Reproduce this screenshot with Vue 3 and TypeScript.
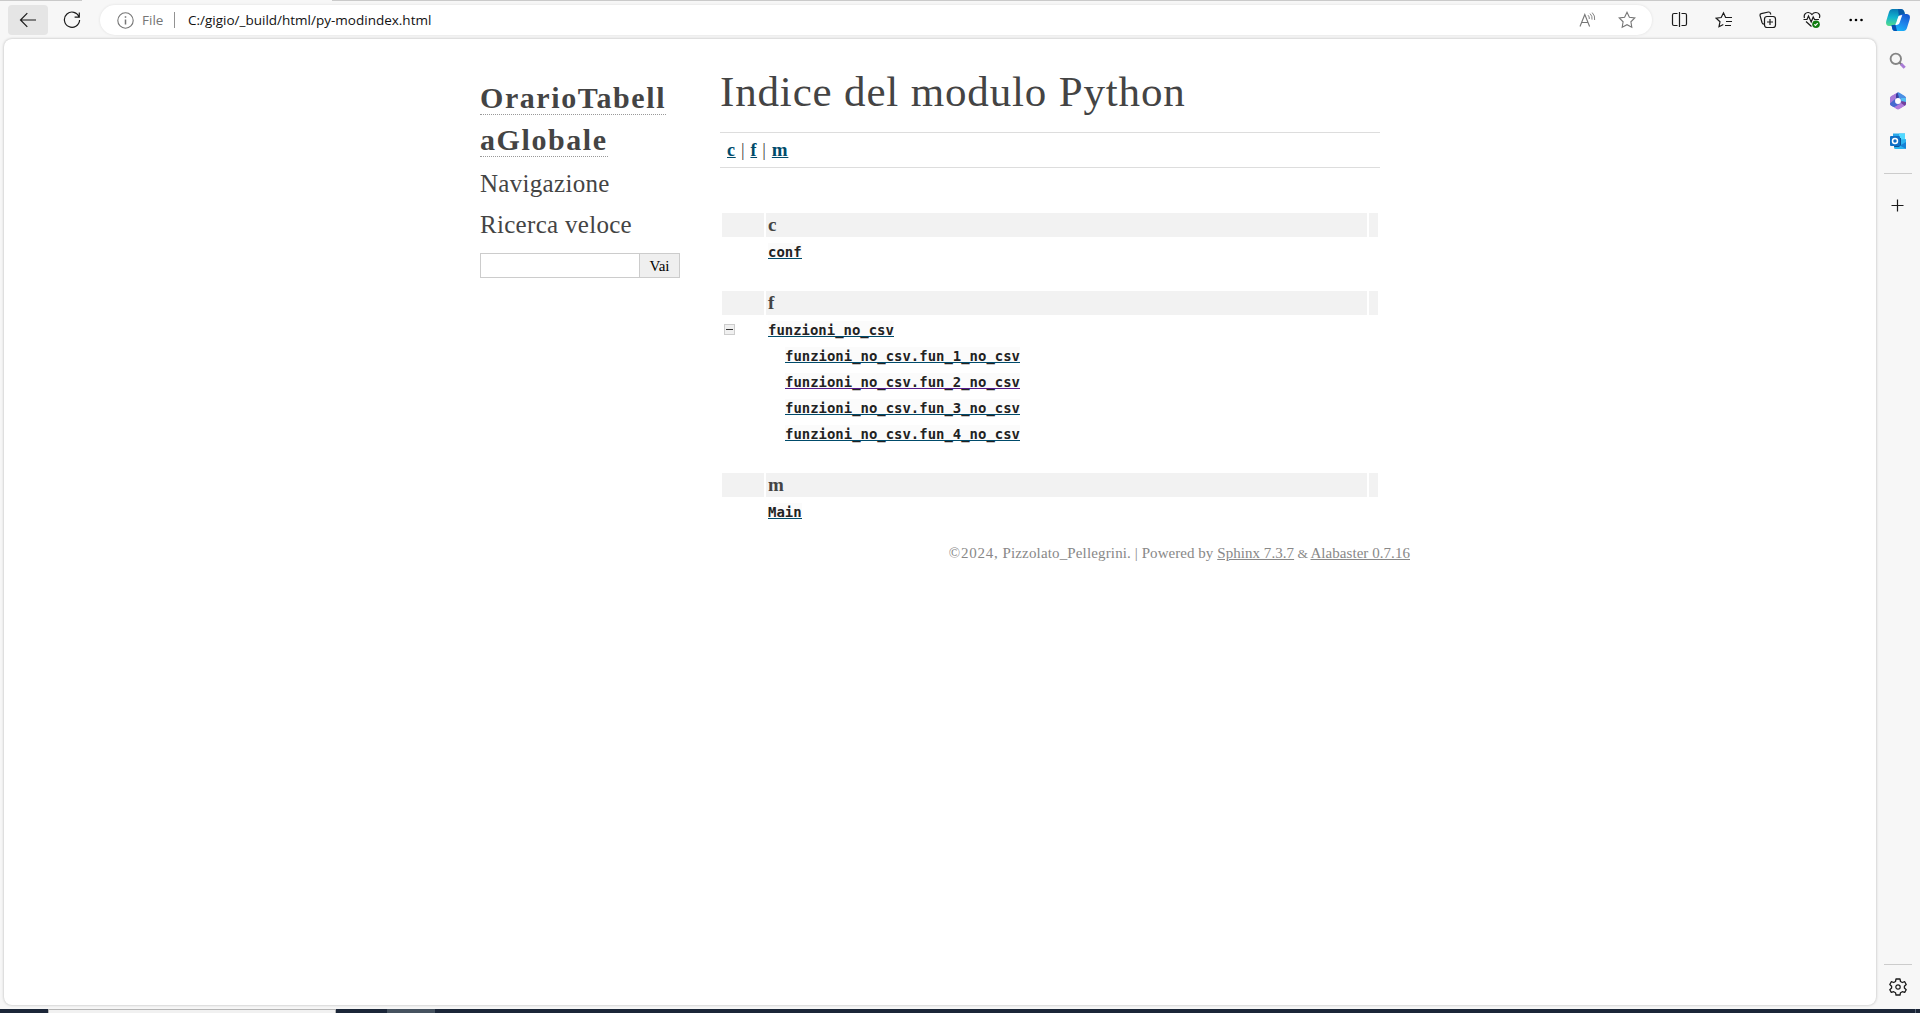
<script setup lang="ts">
interface Entry { name: string; sub?: boolean; toggle?: boolean; visited?: boolean }
interface Group { letter: string; entries: Entry[] }

const groups: Group[] = [
  { letter: 'c', entries: [{ name: 'conf' }] },
  {
    letter: 'f',
    entries: [
      { name: 'funzioni_no_csv', toggle: true },
      { name: 'funzioni_no_csv.fun_1_no_csv', sub: true },
      { name: 'funzioni_no_csv.fun_2_no_csv', sub: true, visited: true },
      { name: 'funzioni_no_csv.fun_3_no_csv', sub: true },
      { name: 'funzioni_no_csv.fun_4_no_csv', sub: true },
    ],
  },
  { letter: 'm', entries: [{ name: 'Main' }] },
]
</script>

<template>
  <div class="window">
    <div class="tabstrip"><i class="active-tab"></i></div>
    <header class="toolbar">
      <div class="back">
        <svg width="18" height="16" viewBox="0 0 18 16" class="ink"><path d="M17 8H1.5M8.3 1.2 1.5 8l6.800 6.800" /></svg>
      </div>
      <svg class="reload ink" width="18" height="18" viewBox="0 0 18 18"><path d="M16.200 6.200A7.600 7.600 0 1 0 16.600 9M16.300 1.500V6.200H11.600" /></svg>
      <div class="address">
        <svg width="17" height="17" viewBox="0 0 17 17" class="gray"><circle cx="8.500" cy="8.500" r="7.700" /><path d="M8.500 7.500v5M8.500 4.300v1.500" stroke-width="1.500" /></svg>
        <span class="scheme">File</span>
        <i class="divider"></i>
        <span class="url">C:/gigio/_build/html/py-modindex.html</span>
        <svg class="read gray" width="17" height="16" viewBox="0 0 17 16"><path d="M1 14.500 5.800 2.500l4.800 12M2.700 10.500h6.200" /><path d="M9 3.200q1.600 1.500 1.300 3.800M11 1.600q2.600 2.400 2 6M13.200.6q3.200 3.200 2.400 7.400" stroke-width=".9" /></svg>
        <svg class="star gray" width="18" height="18" viewBox="0 0 18 18"><path d="m9 1.300 2.400 4.900 5.400.8-3.900 3.800.9 5.400L9 13.700l-4.800 2.500.9-5.400L1.200 7l5.400-.8z" /></svg>
      </div>
      <nav class="tools">
        <svg width="18" height="18" viewBox="0 0 18 18" class="ink"><path d="M6.500 2.500H3Q1.500 2.500 1.500 4v9q0 1.500 1.500 1.500h3.500M8.500 1v15M10.500 2.500H14q1.500 0 1.500 1.500v9q0 1.500-1.500 1.500h-3.500" /></svg>
        <svg width="18" height="18" viewBox="0 0 18 18" class="ink"><path d="M17 6.500H10.600L8.500 1.800 6.200 6.500l-5 .7 3.800 3.500-1 5L8.300 13.500M11 10.500h6M10 14.500h6" /></svg>
        <svg width="18" height="18" viewBox="0 0 18 18" class="ink"><path d="M5 13.200Q3.500 13 3 11.500L1 4.500Q.8 3 2.200 2.700L9.500 1q1.600-.2 2 1.500l.4 1" /><rect x="5.500" y="5.500" width="11" height="11" rx="2.500" /><path d="M11 8v6M8 11h6" /></svg>
        <svg width="18" height="18" viewBox="0 0 18 18" class="ink"><path d="M1.500 7C.3 3.500 3 1.300 5.300 1.500 7.500 1.700 9 3.500 9 3.500S10.500 1.500 12.700 1.500c3 0 5 2.500 3.600 5.500M3 10.500l5.500 5M.5 8.500H4L5.500 5l2.700 6 2-5 1.300 2.500h4.500" /><circle cx="13" cy="13.300" r="3.800" fill="#107c10" stroke="none" /><path d="m11.300 13.300 1.200 1.200 2.200-2.400" stroke="#fff" /></svg>
        <svg width="18" height="18" viewBox="0 0 18 18"><circle cx="3.700" cy="9" r="1.300" /><circle cx="9" cy="9" r="1.300" /><circle cx="14.500" cy="9" r="1.300" /></svg>
      </nav>
      <svg class="copilot" width="24" height="24" viewBox="0 0 24 24">
        <defs>
          <linearGradient id="ca" x1="0.300" y1="0" x2="0.200" y2="1"><stop offset="0" stop-color="#087cb5" /><stop offset=".5" stop-color="#13b5cf" /><stop offset="1" stop-color="#55dc8a" /></linearGradient>
          <linearGradient id="cb" x1="0.800" y1="0" x2="0.300" y2="1"><stop offset="0" stop-color="#1557d0" /><stop offset=".5" stop-color="#1f83ea" /><stop offset="1" stop-color="#18b8fa" /></linearGradient>
        </defs>
        <path d="M6.500 1H15q2.500 0 3.300 2.800L19 7h-3q-3 0-3.800 2.800L11 14q-1 4-3.500 4H3q-4-.7-2.600-5.500L3 4Q4 1 6.500 1z" fill="url(#ca)" />
        <path d="M12 1h3q2.500 0 3.300 2.800L19 7h-3q-2 0-3.100 1.300z" fill="#0759a8" />
        <path d="M17.500 23H9q-2.500 0-2.900-3L5.500 17H8q2.500-.3 3.300-3l1.500-4.500Q13.800 6 16.500 6H21q4 .7 2.600 5.500L21 20q-1 3-3.500 3z" fill="url(#cb)" />
        <path d="m10.300 14.500 2-6q.6-1.500 4-1.500L13.500 15q-.8 2-4.500 2.200z" fill="#fff" />
        <path d="M5.500 17H8l1.500-.3L11 23H9q-2.500 0-2.900-3z" fill="#064eaf" />
      </svg>
    </header>

    <div class="middle">
      <main class="page">
        <div class="document">
          <aside class="sidebar">
            <h1 class="logo"><a>OrarioTabell<br>aGlobale</a></h1>
            <h3 class="nav">Navigazione</h3>
            <h3>Ricerca veloce</h3>
            <div class="search"><span></span><button>Vai</button></div>
          </aside>
          <section class="body">
            <h1>Indice del modulo Python</h1>
            <div class="jumpbox"><a>c</a> | <a>f</a> | <a class="wide">m</a></div>
            <div class="index">
              <div v-for="g in groups" :key="g.letter" class="group">
                <div class="row cap"><i></i><b>{{ g.letter }}</b><i></i></div>
                <div v-for="e in g.entries" :key="e.name" class="row">
                  <div><i v-if="e.toggle" class="toggle"></i></div>
                  <div><a class="entry" :class="{ sub: e.sub, visited: e.visited }">{{ e.name }}</a></div>
                </div>
              </div>
            </div>
          </section>
        </div>
        <footer><span class="year">©2024,</span> <span class="author">Pizzolato_Pellegrini.</span> | Powered by <a>Sphinx 7.3.7</a> <span class="amp">&amp;</span> <a>Alabaster 0.7.16</a></footer>
      </main>
      <aside class="rail">
        <svg class="find" width="18" height="18" viewBox="0 0 18 18" fill="none"><circle cx="6.800" cy="6.800" r="5.200" stroke="#858585" stroke-width="1.900" /><path d="m10.700 10.700 2 2" stroke="#777" stroke-width="2" /><path d="m12 12 3.700 3.700" stroke="#a97bd6" stroke-width="3" /></svg>
        <svg class="office" width="18" height="18" viewBox="0 0 18 18"><path d="M9 .7 16.700 5v8L9 17.300 1.300 13V5z" fill="#6d6fd6" /><path d="M8.500.5 2.300 4Q1 5 1 6.500v5q0 1.500 1.300 2.300L5 15l2.500-4-1-3z" fill="#a779d8" /><path d="M1 11.500q0 1.500 1.300 2.300L5 15.300l3-1.600V12L6 10V7z" fill="#4769cf" /><path d="M8.500.5q1-.4 2 .2L15.700 4Q17 5 17 6.500V11l-5-2-1-2.500-4-1V3z" fill="#4a8fe4" /><path d="M12 6h5v5l-4.500-1.500z" fill="#52bdf2" /><path d="M8.500.5 7 2.300V7l3-1.500z" fill="#373f9e" /><path d="M17 10v1.500q0 1.500-1.300 2.300L10.500 17q-1.500.8-3 0L5 15.300 11 12l1-2z" fill="#b27bdc" /><path d="M17 10v1.500q0 1.500-1.300 2.300L12 11l.5-2z" fill="#70419c" /><circle cx="9" cy="9" r="2.900" fill="#fff" /></svg>
        <svg class="outlook" width="18" height="18" viewBox="0 0 18 18"><path d="M4 1.500h12V14H4z" fill="#28a8ea" /><path d="M10 1.500h6v6h-6z" fill="#50d9ff" /><path d="M4 4h6v5H4z" fill="#0364b8" /><path d="m5 10 12-3v8.500q0 1.500-1.500 1.500h-9Q5 17 5 15.500z" fill="#2bb3ef" /><path d="m17 10-6 3.500L17 17z" fill="#1681d5" /><path d="M8 6h4v7l-2 2H5z" fill="#0b5295" /><rect x="1" y="4" width="10" height="10" rx="1" fill="#0f6fc6" /><circle cx="6" cy="9" r="2.500" fill="none" stroke="#fff" stroke-width="1.500" /></svg>
        <hr>
        <svg class="plus ink" width="13" height="13" viewBox="0 0 13 13"><path d="M6.500.5v12M.5 6.500h12" /></svg>
        <div class="space"></div>
        <hr class="low">
        <svg class="gear ink" width="18" height="18" viewBox="0 0 18 18"><path d="m7 1-.5 2.500-1.800 1L2.300 3.700.8 6.500l1.800 1.700v1.900L.8 11.700l1.500 2.700 2.400-.7 1.800 1L7 17h4l.5-2.300 1.800-1 2.400.7 1.500-2.700-1.800-1.600V8.200l1.800-1.700-1.500-2.800-2.400.8-1.800-1L11 1z" stroke-linejoin="round" stroke-width="1.300" /><circle cx="9" cy="9" r="2.200" /></svg>
      </aside>
    </div>
    <div class="taskbar"><i class="task"></i><i class="task dim"></i><i class="peek"></i></div>
  </div>
</template>

<style>
body { margin: 0; overflow: hidden; }
</style>

<style scoped>
* { box-sizing: border-box; }
svg { display: block; flex: none; }
.window { width: 1920px; height: 1013px; display: flex; flex-direction: column; background: #f7f7f7; font-family: "Liberation Serif", serif; color: #444; overflow: hidden; }
.tabstrip { height: 1px; background: #cacaca; padding-left: 82px; flex: none; }
.active-tab { display: block; width: 250px; height: 1px; background: #f7f7f7; }
.ink { fill: none; stroke: #1b1b1b; stroke-width: 1.200; }
.gray { fill: none; stroke: #767676; stroke-width: 1.100; }
.toolbar { height: 38px; flex: none; display: flex; padding: 4px 0 0 8px; }
.back { width: 40px; height: 30px; border-radius: 4px; background: #e5e5e5; display: flex; align-items: center; justify-content: center; }
.reload { margin: 6px 0 0 15px; }
.address { width: 1552px; height: 30px; margin-left: 19px; padding-left: 17px; border-radius: 15px; background: #fff; box-shadow: 0 0 3px #0000001a; display: flex; align-items: center; font-family: "Open Sans", sans-serif; font-size: 13.500px; white-space: nowrap; }
.scheme { width: 23px; margin-left: 8px; color: #767676; }
.divider { width: 1px; height: 16px; margin-left: 9px; background: #929292; }
.url { margin-left: 13px; color: #111; }
.read { margin-left: auto; }
.star { margin: 0 16px 0 22px; }
.tools { display: flex; gap: 26px; margin: 6px 0 0 19px; }
.copilot { margin: 3px 0 0 21px; }
.middle { display: flex; height: 970px; flex: none; padding-left: 4px; }
.page { width: 1872px; height: 966px; background: #fff; border-radius: 8px; box-shadow: 0 0 3px #0004; display: flex; flex-direction: column; }
.document { width: 940px; margin-left: 466px; display: flex; height: 490px; }
.sidebar { width: 250px; padding: 38px 40px 0 10px; }
h1, h3 { margin: 0; font-weight: 400; white-space: nowrap; }
.logo { font-size: 30px; line-height: 42px; font-weight: 700; letter-spacing: 1.570px; height: 86px; }
.logo a { border-bottom: 1px dotted #999; }
h3 { font-size: 25px; line-height: 41px; letter-spacing: .300px; height: 41px; }
.search { display: flex; width: 200px; height: 25px; margin-top: 8px; border: 1px solid #ccc; }
.search span { width: 158px; }
.search button { flex: 1; border: 0; border-left: 1px solid #ccc; padding: 1px 0 0; background: #efefef; color: #000; font: 15px "Liberation Serif", serif; }
.body { width: 660px; padding-top: 20px; }
.body h1 { font-size: 43px; line-height: 65px; letter-spacing: .840px; height: 65px; }
.jumpbox { margin-top: 8px; height: 36px; border: solid #ddd; border-width: 1px 0; padding-left: 7px; font-size: 18px; line-height: 34px; letter-spacing: .700px; }
.jumpbox a { color: #004b6b; font-weight: 700; text-decoration: underline; }
.jumpbox .wide { font-size: 19px; }
.index { margin: 45px 2px 0; display: flex; flex-direction: column; gap: 28px; }
.group { display: flex; flex-direction: column; gap: 2px; }
.row { display: grid; grid-template-columns: 42px 601px 9px; gap: 2px; height: 24px; }
.cap > * { background: #f2f2f2; }
.cap b { padding-left: 2px; font-size: 19px; line-height: 24px; }
.toggle { display: block; width: 11px; height: 11px; margin: 7px 0 0 2px; border: 1px solid #ccc; background: linear-gradient(#333, #333) center / 7px 1px no-repeat #f0f0f0; }
.entry { display: block; width: max-content; height: 16px; margin: 4px 0 0 2px; background: #fbfbfb; border-bottom: 1px solid #004b6b; color: #222; font: 700 13.950px/19px "DejaVu Sans Mono", monospace; }
.entry.sub { margin-left: 19px; }
.entry.visited { border-color: #551a8b; }
footer { width: 940px; margin: 14px 0 0 466px; text-align: right; font-size: 15px; line-height: 20px; color: #888; letter-spacing: .050px; }
footer a { text-decoration: underline; }
.year { letter-spacing: .800px; }
.author { letter-spacing: .150px; }
.amp { margin: 0 -.500px; font-size: 13.500px; }
.rail { width: 44px; display: flex; flex-direction: column; align-items: center; }
.find { margin-top: 13px; }
.office { margin-top: 22px; }
.outlook { margin-top: 22px; }
.rail hr { width: 28px; height: 1px; margin: 23px 0 0; border: 0; background: #ccc; }
.plus { margin: 25px 1px 0 0; }
.space { flex: 1; }
.rail .low { margin: 0; }
.gear { margin: 13px 0 13px; }
.taskbar { height: 4px; background: #1b2638; display: flex; padding-left: 48px; }
.task { width: 288px; background: #f1f1f1; border: 1px solid #b5b5b5; border-bottom: 0; }
.dim { width: 48px; margin-left: 51px; background: #46525f; border: 0; }
.peek { width: 1px; margin: 0 4px 0 auto; background: #596575; }
</style>
